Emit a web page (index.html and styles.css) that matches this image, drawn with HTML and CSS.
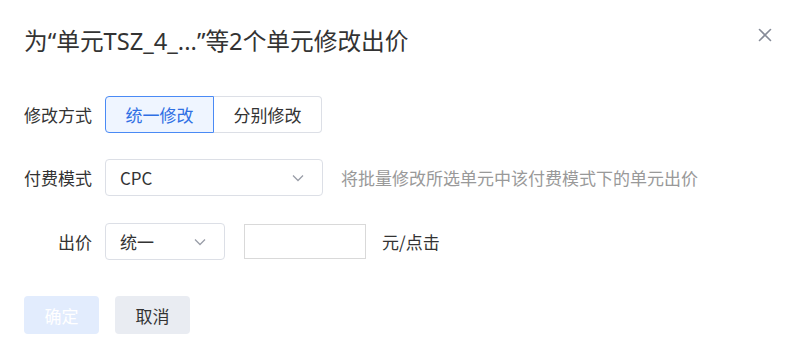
FILE: index.html
```html
<!DOCTYPE html>
<html lang="zh-CN">
<head>
<meta charset="utf-8">
<title>修改出价</title>
<link rel="stylesheet" href="styles.css">
</head>
<body>
<div class="dialog">
  <div class="dialog-header">
    <h1 class="dialog-title">为“单元TSZ_4_...”等2个单元修改出价</h1>
    <button class="close-btn" aria-label="关闭">
      <svg width="14" height="14" viewBox="0 0 14 14"><path d="M1.5 1.5 L12.5 12.5 M12.5 1.5 L1.5 12.5" stroke="#868b98" stroke-width="1.6" stroke-linecap="round" fill="none"/></svg>
    </button>
  </div>
  <div class="form">
    <div class="form-row">
      <label class="form-label">修改方式</label>
      <div class="seg">
        <button class="seg-btn active">统一修改</button>
        <button class="seg-btn">分别修改</button>
      </div>
    </div>
    <div class="form-row">
      <label class="form-label">付费模式</label>
      <div class="select select-wide">
        <span class="select-value">CPC</span>
        <svg class="chevron" width="12" height="8" viewBox="0 0 12 8"><path d="M1 1.5 L6 6.5 L11 1.5" stroke="#9a9ea8" stroke-width="1.3" fill="none"/></svg>
      </div>
      <span class="hint">将批量修改所选单元中该付费模式下的单元出价</span>
    </div>
    <div class="form-row">
      <label class="form-label">出价</label>
      <div class="select select-narrow">
        <span class="select-value">统一</span>
        <svg class="chevron" width="12" height="8" viewBox="0 0 12 8"><path d="M1 1.5 L6 6.5 L11 1.5" stroke="#9a9ea8" stroke-width="1.3" fill="none"/></svg>
      </div>
      <input class="price-input" type="text">
      <span class="unit">元/点击</span>
    </div>
  </div>
  <div class="footer">
    <button class="btn btn-primary" disabled>确定</button>
    <button class="btn btn-default">取消</button>
  </div>
</div>
</body>
</html>
```
FILE: styles.css
```css
* { box-sizing: border-box; }
html, body { margin: 0; padding: 0; background: #fff; }
body {
  font-family: "Noto Sans CJK SC", "Noto Sans", sans-serif;
  color: #333;
  font-size: 17px;
}
.dialog {
  width: 798px;
  height: 344px;
  padding: 25px 24px 0 24px;
  position: relative;
}
.dialog-header {
  display: flex;
  align-items: center;
  justify-content: space-between;
  height: 32px;
}
.dialog-title {
  margin: 0;
  font-family: "Noto Sans", "Noto Sans CJK SC", sans-serif;
  font-size: 23.7px;
  font-weight: 400;
  line-height: 32px;
  color: #333;
}
.close-btn {
  border: 0;
  background: none;
  padding: 0;
  width: 14px;
  height: 14px;
  margin-right: 2px;
  margin-top: -12px;
  display: flex;
}
.form {
  margin-top: 39px;
  display: flex;
  flex-direction: column;
  gap: 26px;
}
.form-row {
  display: flex;
  align-items: center;
  height: 37px;
}
.form-row + .form-row + .form-row { margin-top: 1px; }
.form-label {
  width: 68px;
  margin-right: 13px;
  text-align: right;
  white-space: nowrap;
  color: #333;
}
.seg { display: flex; height: 37px; }
.seg-btn {
  font: inherit;
  font-size: 17px;
  width: 109px;
  height: 37px;
  border: 1px solid #dcdfe6;
  background: #fff;
  color: #333;
  padding: 0;
}
.seg-btn:first-child { border-radius: 4px 0 0 4px; }
.seg-btn:last-child { border-radius: 0 4px 4px 0; border-left: 0; width: 108px; }
.seg-btn.active {
  border-color: #4a8af5;
  background: #eff5ff;
  color: #2f6fe4;
}
.select {
  height: 37px;
  border: 1px solid #dcdfe6;
  border-radius: 4px;
  display: flex;
  align-items: center;
  justify-content: space-between;
  padding: 0 18px 0 14px;
}
.select-wide { width: 218px; }
.select-narrow { width: 120px; padding-right: 18px; }
.select-value { color: #333; }
.hint { margin-left: 18px; color: #999; white-space: nowrap; }
.price-input {
  margin-left: 19px;
  width: 122px;
  height: 35px;
  border: 1px solid #d9d9d9;
  border-radius: 0;
  outline: none;
}
.unit { margin-left: 16px; color: #333; }
.footer {
  margin-top: 36px;
  display: flex;
  gap: 16px;
}
.btn {
  font: inherit;
  font-size: 17px;
  width: 75px;
  height: 38px;
  border: 0;
  border-radius: 4px;
  padding: 0;
}
.btn-primary { background: #e2ecfd; color: #fff; }
.btn-default { background: #e9ecf2; color: #333; }
```
